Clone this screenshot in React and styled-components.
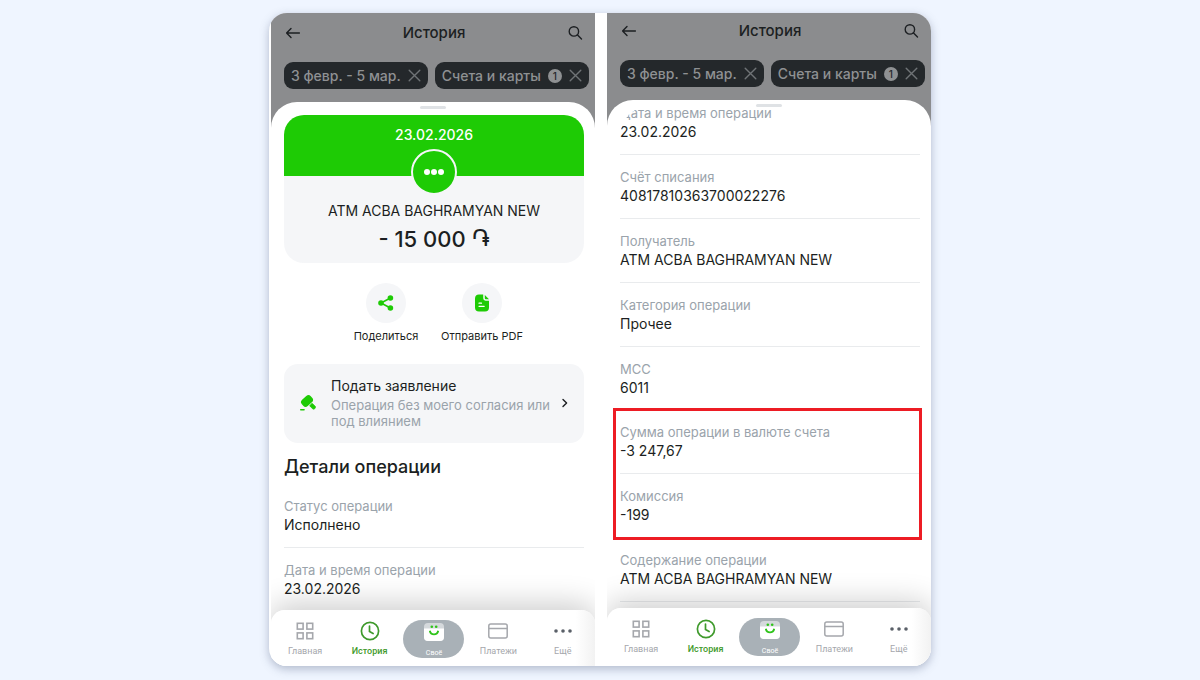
import React from "react";
import styled, { createGlobalStyle } from "styled-components";

const GlobalStyle = createGlobalStyle`
	* {
		box-sizing: border-box;
	}
	body {
		margin: 0;
		background-color: #eff5ff;
		color: #1c1f22;
		font-family: Inter, "Noto Sans", sans-serif;
	}
	button {
		border: none;
		padding: 0;
		background: none;
		color: inherit;
		font: inherit;
		cursor: pointer;
	}
	svg {
		display: block;
		flex: none;
	}
`;

const Page = styled.main`
	display: flex;
	justify-content: center;
	min-height: 100vh;
	padding: 13px 0 14px;
`;

const Board = styled.div`
	display: grid;
	grid-template-columns: 1fr 1fr;
	column-gap: 12px;
	width: 100%;
	max-width: 662px;
	padding-left: 2px;
	border-radius: 18px;
	background-color: #ffffff;
	box-shadow: 0 3px 10px rgba(60, 75, 110, 0.35);
	overflow: hidden;
`;

const Phone = styled.section`
	display: flex;
	flex-direction: column;
	min-width: 0;
	padding-top: ${({ $inset }) => $inset}px;
	background: linear-gradient(#8b8c8e 200px, #ffffff 200px);
`;

const TopBar = styled.header`
	display: flex;
	align-items: center;
	justify-content: space-between;
	height: 35px;
	padding: 0 12px 0 14px;
`;

const Title = styled.h1`
	margin: 0;
	font-size: 15px;
	line-height: 20px;
	font-weight: 500;
`;

const Chips = styled.div`
	display: flex;
	gap: 7px;
	margin: 12px 6px 13px 13px;
`;

const Chip = styled.div`
	display: flex;
	align-items: center;
	gap: 7px;
	height: 27px;
	padding: 0 7px;
	border-radius: 9px;
	background-color: #24282b;
	color: #8f9193;
	font-size: 14px;
	font-weight: 500;
	white-space: nowrap;
`;

const Count = styled.span`
	width: 14px;
	height: 14px;
	border-radius: 50%;
	background-color: #8f9193;
	color: #24282b;
	font-size: 10px;
	line-height: 14px;
	text-align: center;
`;

const Sheet = styled.div`
	position: relative;
	display: flex;
	flex-direction: column;
	flex: 1;
	border-radius: 26px 26px 0 0;
	background-color: #ffffff;
`;

const Handle = styled.span`
	position: absolute;
	top: 4px;
	left: 50%;
	width: 26px;
	height: 3px;
	margin-left: -13px;
	border-radius: 2px;
	background-color: #dfe2e5;
`;

const ScrollArea = styled.div`
	display: flex;
	flex-direction: column;
	flex: 1;
	padding: 0 11px 0 13px;
	overflow: hidden;
`;

const Summary = styled.div`
	display: flex;
	flex-direction: column;
	align-items: center;
	margin-top: 13px;
	padding-bottom: 10px;
	border-radius: 20px;
	background: linear-gradient(#1ecb05 61px, #f5f6f8 61px);
`;

const SummaryDate = styled.time`
	margin-top: 10px;
	color: #ffffff;
	font-size: 14px;
	line-height: 20px;
	font-weight: 500;
`;

const CategoryBadge = styled.div`
	display: flex;
	align-items: center;
	justify-content: center;
	width: 46px;
	height: 46px;
	margin-top: 4px;
	border: 2px solid #f5f6f8;
	border-radius: 50%;
	background-color: #1ecb05;
	color: #ffffff;
`;

const Merchant = styled.div`
	margin-top: 6px;
	font-size: 14px;
	line-height: 20px;
`;

const Amount = styled.div`
	margin-top: 4px;
	font-size: 22px;
	line-height: 28px;
	font-weight: 500;
`;

const Currency = styled.span`
	font-family: "DejaVu Sans", sans-serif;
	font-size: 24px;
	line-height: 20px;
	font-weight: 400;
`;

const Actions = styled.div`
	display: flex;
	justify-content: center;
	margin: 20px 0;
`;

const Action = styled.button`
	display: flex;
	flex-direction: column;
	align-items: center;
	gap: 5px;
	width: 96px;
	&& {
		font-size: 11px;
		line-height: 16px;
	}
`;

const ActionCircle = styled.span`
	display: flex;
	align-items: center;
	justify-content: center;
	width: 40px;
	height: 40px;
	border-radius: 50%;
	background-color: #f5f6f8;
	color: #1ecb05;
`;

const Claim = styled.button`
	&& {
		display: flex;
		align-items: center;
		gap: 15px;
		padding: 13px 14px 14px 16px;
		border-radius: 14px;
		background-color: #f5f6f8;
		text-align: left;
	}
`;

const ClaimText = styled.span`
	flex: 1;
	margin-right: -12px;
	color: #9aa3ab;
	font-size: 13px;
	line-height: 16px;
`;

const ClaimTitle = styled.span`
	display: block;
	margin-bottom: 2px;
	color: #1c1f22;
	font-size: 14px;
	line-height: 18px;
`;

const DetailsTitle = styled.h2`
	margin: 12px 0 5px;
	font-size: 18px;
	line-height: 24px;
	font-weight: 500;
`;

const Details = styled.div`
	display: flex;
	flex-direction: column;
	flex: 1;
	margin-top: ${({ $scrolled }) => ($scrolled ? "-9px" : "0")};
	margin-bottom: ${({ $scrolled }) => ($scrolled ? "6px" : "-2px")};
`;

const DetailGroup = styled.dl`
	position: relative;
	display: flex;
	flex-direction: column;
	flex: ${({ $rows }) => $rows};
	margin: 0;
`;

// rows that slide under the rounded corner of the sheet
const ClippedGroup = styled(DetailGroup)`
	clip-path: inset(14px 0 0 0 round 32px 0 0 0);
`;

const DetailRow = styled.div`
	flex: 1;
	padding: 13px 0 11px;
	border-bottom: 1px solid #e9ebed;
`;

const DetailLabel = styled.dt`
	color: #9aa3ab;
	font-size: 13px;
	line-height: 18px;
`;

const DetailValue = styled.dd`
	margin: 0;
	font-size: 14px;
	line-height: 20px;
`;

// red frame drawn over the rows that matter
const MarkedGroup = styled(DetailGroup)`
	&::after {
		content: "";
		position: absolute;
		inset: -2px -2px -2px -7px;
		border: 3px solid #ed1c24;
	}
`;

const TabBar = styled.nav`
	position: relative;
	display: grid;
	grid-template-columns: repeat(5, 1fr);
	align-items: start;
	min-height: ${({ $height }) => $height}px;
	padding: 11px 0 0 2px;
	border-radius: 14px 14px 0 0;
	background: linear-gradient(90deg, #ffffff 94%, #f2f2f2);
	box-shadow: 0 -6px 30px rgba(0, 0, 0, 0.2);
	clip-path: inset(-50px 0 0 0);
`;

const Tab = styled.button`
	display: flex;
	flex-direction: column;
	align-items: center;
	justify-self: center;
	gap: 4px;
	&& {
		color: ${({ $active }) => ($active ? "#3f9a2c" : "#a5a7ac")};
		font-family: Roboto, sans-serif;
		font-size: 9px;
		line-height: 12px;
		font-weight: ${({ $active }) => ($active ? 500 : 400)};
	}
`;

const CenterTab = styled(Tab)`
	&& {
		gap: 6px;
		width: 61px;
		height: 38px;
		margin-top: -1px;
		padding-top: 3px;
		border-radius: 19px;
		background-color: #a9b1b7;
		color: #ffffff;
		font-size: 7px;
	}
`;

const BackIcon = () => (
	<svg width="16" height="14" viewBox="0 0 16 14" fill="none" stroke="#1c1f22" strokeWidth="1.4" strokeLinecap="round" strokeLinejoin="round">
		<path d="M14.4 7H1.6M6 2.5 1.6 7 6 11.5" />
	</svg>
);

const SearchIcon = () => (
	<svg width="16" height="16" viewBox="0 0 16 16" fill="none" stroke="#1c1f22" strokeWidth="1.4" strokeLinecap="round">
		<circle cx="6.9" cy="6.4" r="4.7" />
		<path d="m10.3 9.8 4.2 4.2" />
	</svg>
);

const CloseIcon = () => (
	<svg width="13" height="13" viewBox="0 0 13 13" stroke="#6f7376" strokeWidth="1.4" strokeLinecap="round">
		<path d="m1.2 1.2 10.6 10.6M11.8 1.2 1.2 11.8" />
	</svg>
);

const DotsIcon = ({ width, r, color }) => (
	<svg width={width} height="20" viewBox={`0 0 ${width} 20`} fill={color}>
		<circle cx={width / 2 - 7} cy="10" r={r} />
		<circle cx={width / 2} cy="10" r={r} />
		<circle cx={width / 2 + 7} cy="10" r={r} />
	</svg>
);

const ShareIcon = () => (
	<svg width="16" height="16" viewBox="0 0 16 16" fill="currentColor">
		<path d="M12.4 3 3 8l9.4 5" fill="none" stroke="currentColor" strokeWidth="1.6" />
		<circle cx="12.4" cy="3" r="2.8" />
		<circle cx="3" cy="8" r="2.8" />
		<circle cx="12.4" cy="13" r="2.8" />
	</svg>
);

const PdfIcon = () => (
	<svg width="16" height="18" viewBox="0 0 16 18" fill="currentColor">
		<path d="M5 .6h4.2v3.7a2.4 2.4 0 0 0 2.4 2.4H15v6.8a4 4 0 0 1-4 4H5a4 4 0 0 1-4-4v-9a4 4 0 0 1 4-3.9Z" />
		<path d="M10.8 1v3.3c0 .5.4.9.9.9H15Z" />
		<path d="M5 9.2h2.5M5 12.3h5.2" stroke="#ffffff" strokeWidth="1.2" strokeLinecap="round" />
	</svg>
);

const GavelIcon = () => (
	<svg width="16" height="18" viewBox="0 0 16 18" fill="#1ecb05">
		<rect x="1" y="2.8" width="12" height="8.4" rx="3.2" transform="rotate(-42 7 7)" />
		<path d="m9.7 11.7 2.4-2.4 3 3a1.8 1.8 0 0 1-2.5 2.5Z" stroke="#1ecb05" strokeWidth=".8" />
		<rect x="0" y="15" width="4.8" height="1.4" rx=".7" />
	</svg>
);

const ChevronIcon = () => (
	<svg width="10" height="10" viewBox="0 0 10 10" fill="none" stroke="#1c1f22" strokeWidth="1.4" strokeLinecap="round" strokeLinejoin="round">
		<path d="m3 1.4 3.6 3.6L3 8.6" />
	</svg>
);

const HomeIcon = () => (
	<svg width="20" height="20" viewBox="0 0 20 20" fill="none" stroke="currentColor" strokeWidth="1.6">
		<rect x="2.3" y="2.3" width="5.8" height="5.8" />
		<rect x="11.9" y="2.3" width="5.8" height="5.8" />
		<rect x="2.3" y="11.9" width="5.8" height="5.8" />
		<rect x="11.9" y="11.9" width="5.8" height="5.8" />
	</svg>
);

const HistoryIcon = () => (
	<svg width="20" height="20" viewBox="0 0 20 20" fill="none" stroke="currentColor" strokeWidth="1.7" strokeLinecap="round">
		<circle cx="10" cy="10" r="8.6" />
		<path d="M9.5 5v5.5l3.6 2" />
	</svg>
);

const OwnIcon = () => (
	<svg width="20" height="18" viewBox="0 0 20 18" fill="none">
		<rect x="0" y="0" width="20" height="18" rx="4" fill="#d5d9dc" />
		<path d="M0 5.5h20V14a4 4 0 0 1-4 4H4a4 4 0 0 1-4-4Z" fill="#ffffff" />
		<circle cx="7.8" cy="3.8" r="1.3" fill="#2fc41a" />
		<circle cx="12.2" cy="3.8" r="1.3" fill="#2fc41a" />
		<path d="M5.8 7.8a4.3 4.6 0 0 0 8.4 0" stroke="#2fc41a" strokeWidth="1.9" />
	</svg>
);

const CardIcon = () => (
	<svg width="20" height="20" viewBox="0 0 20 20" fill="none" stroke="currentColor" strokeWidth="1.5">
		<rect x=".8" y="2.9" width="18.4" height="14" rx="2" />
		<path d="M.8 7.6h18.4" />
	</svg>
);

const ScreenHeader = () => (
	<>
		<TopBar>
			<button aria-label="Назад">
				<BackIcon />
			</button>
			<Title>История</Title>
			<button aria-label="Поиск">
				<SearchIcon />
			</button>
		</TopBar>
		<Chips>
			<Chip>
				3 февр. - 5 мар.
				<button aria-label="Сбросить период">
					<CloseIcon />
				</button>
			</Chip>
			<Chip>
				Счета и карты
				<Count>1</Count>
				<button aria-label="Сбросить счета">
					<CloseIcon />
				</button>
			</Chip>
		</Chips>
	</>
);

const Tabs = ({ height }) => (
	<TabBar $height={height}>
		<Tab>
			<HomeIcon />
			Главная
		</Tab>
		<Tab $active>
			<HistoryIcon />
			История
		</Tab>
		<CenterTab>
			<OwnIcon />
			Своё
		</CenterTab>
		<Tab>
			<CardIcon />
			Платежи
		</Tab>
		<Tab>
			<DotsIcon width={20} r={1.8} color="#5a6068" />
			Ещё
		</Tab>
	</TabBar>
);

const Detail = ({ label, value }) => (
	<DetailRow>
		<DetailLabel>{label}</DetailLabel>
		<DetailValue>{value}</DetailValue>
	</DetailRow>
);

const App = () => {
	return (
		<Page>
			<GlobalStyle />
			<Board>
				<Phone $inset={2}>
					<ScreenHeader />
					<Sheet>
						<ScrollArea>
							<Summary>
								<SummaryDate>23.02.2026</SummaryDate>
								<CategoryBadge>
									<DotsIcon width={22} r={3} color="#ffffff" />
								</CategoryBadge>
								<Merchant>ATM ACBA BAGHRAMYAN NEW</Merchant>
								<Amount>
									- 15 000 <Currency>֏</Currency>
								</Amount>
							</Summary>
							<Actions>
								<Action>
									<ActionCircle>
										<ShareIcon />
									</ActionCircle>
									Поделиться
								</Action>
								<Action>
									<ActionCircle>
										<PdfIcon />
									</ActionCircle>
									Отправить PDF
								</Action>
							</Actions>
							<Claim>
								<GavelIcon />
								<ClaimText>
									<ClaimTitle>Подать заявление</ClaimTitle>
									Операция без моего согласия или под влиянием
								</ClaimText>
								<ChevronIcon />
							</Claim>
							<DetailsTitle>Детали операции</DetailsTitle>
							<Details>
								<DetailGroup $rows={2}>
									<Detail label="Статус операции" value="Исполнено" />
									<Detail label="Дата и время операции" value="23.02.2026" />
								</DetailGroup>
							</Details>
						</ScrollArea>
						<Handle />
					</Sheet>
					<Tabs height={56} />
				</Phone>
				<Phone $inset={0}>
					<ScreenHeader />
					<Sheet>
						<ScrollArea>
							<Details $scrolled>
								<ClippedGroup $rows={5}>
									<Detail label="Дата и время операции" value="23.02.2026" />
									<Detail label="Счёт списания" value="40817810363700022276" />
									<Detail label="Получатель" value="ATM ACBA BAGHRAMYAN NEW" />
									<Detail label="Категория операции" value="Прочее" />
									<Detail label="МСС" value="6011" />
								</ClippedGroup>
								<MarkedGroup $rows={2}>
									<Detail label="Сумма операции в валюте счета" value="-3 247,67" />
									<Detail label="Комиссия" value="-199" />
								</MarkedGroup>
								<DetailGroup $rows={1}>
									<Detail label="Содержание операции" value="ATM ACBA BAGHRAMYAN NEW" />
								</DetailGroup>
							</Details>
						</ScrollArea>
						<Handle />
					</Sheet>
					<Tabs height={58} />
				</Phone>
			</Board>
		</Page>
	);
};

export default App;
